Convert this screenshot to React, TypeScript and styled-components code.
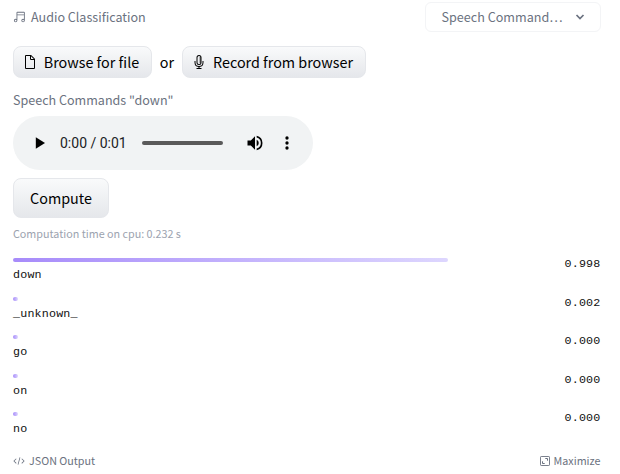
import React from "react";
import styled, { createGlobalStyle } from "styled-components";

const Global = createGlobalStyle`
  *, *::before, *::after { box-sizing: border-box; }
  body { margin: 0; background: #fff; color: #000; font-family: "Noto Sans CJK SC", "Noto Sans", sans-serif; }
  button { font: inherit; color: inherit; margin: 0; cursor: pointer; }
  svg { display: block; flex: none; }
`;

const Widget = styled.main`
  width: 620px;
  height: 474px;
  padding: 2px 19px 0 13px;
  overflow: hidden;
  display: flex;
  flex-direction: column;
`;

const Header = styled.header`
  display: flex;
  justify-content: space-between;
  height: 30px;
  align-items: center;
`;

const Task = styled.div`
  display: flex;
  align-items: center;
  gap: 4px;
  color: #6b7280;
  font-size: 12.55px;
  line-height: 20px;
`;

const Select = styled.button`
  width: 176px;
  height: 30px;
  padding: 0 15px 0 15.5px;
  display: flex;
  align-items: center;
  justify-content: space-between;
  background: #fff;
  border: 1px solid #f3f4f6;
  border-radius: 6px;
  && { color: #6b7280; font-size: 12.6px; line-height: 20px; white-space: nowrap; }
`;

const Sources = styled.div`
  display: flex;
  align-items: center;
  margin-top: 14px;
  font-size: 14.35px;
  line-height: 24px;
`;

const Or = styled.span`
  width: 30px;
  text-align: center;
`;

const Button = styled.button<{ $width: number; $large?: boolean }>`
  width: ${(p) => p.$width}px;
  height: ${(p) => (p.$large ? 40 : 32)}px;
  padding: 0 ${(p) => (p.$large ? 0 : 4)}px 0 0;
  flex: none;
  display: flex;
  align-items: center;
  justify-content: center;
  gap: 6px;
  border: 1px solid #e5e7eb;
  border-radius: 8px;
  background: linear-gradient(to bottom, #f9fafb, #e5e7eb);
  && { font-size: 14.35px; line-height: 24px; }
`;

const SampleName = styled.div`
  margin-top: 12px;
  height: 20px;
  line-height: 20px;
  font-size: 12.55px;
  color: #6b7280;
`;

const Player = styled.div`
  margin: 6px 0 8px;
  width: 300px;
  height: 54px;
  flex: none;
  border-radius: 27px;
  background: #f1f3f4;
  display: flex;
  align-items: center;
  padding: 0 16px 0 17px;
`;

const Time = styled.span`
  width: 82px;
  flex: none;
  padding-left: 10px;
  font: 14px/20px Roboto, sans-serif;
  color: #202124;
  white-space: nowrap;
`;

const Track = styled.div`
  width: 81px;
  flex: none;
  height: 4px;
  margin: 0 22px 0 10px;
  border-radius: 2px;
  background: #5a5a5a;
`;

const Timing = styled.div`
  margin-top: 8px;
  height: 16px;
  font-size: 10.75px;
  line-height: 16px;
  color: #9ca3af;
`;

const Results = styled.div`
  margin-top: 16px;
  padding-right: 0.5px;
  display: grid;
  grid-auto-rows: 38.5px;
  height: 193px;
  font: 11.7px/16px "Liberation Mono", monospace;
  letter-spacing: 0.18px;
  color: #111;
`;

const Result = styled.div`
  display: flex;
  justify-content: space-between;
`;

const Meter = styled.div`
  width: 435px;
`;

const Bar = styled.div`
  height: 4px;
  min-width: 5px;
  border-radius: 2px;
  margin-bottom: 5px;
  background: linear-gradient(to right, #a78bfa, #ddd6fe);
`;

const Score = styled.span`
  margin-top: -2px;
`;

const Footer = styled.footer`
  display: flex;
  justify-content: space-between;
  height: 20px;
  padding-right: 0.5px;
  font-size: 10.75px;
  line-height: 16px;
  color: #6b7280;
`;

const FooterItem = styled.div`
  display: flex;
  align-items: center;
  gap: 4px;
`;

const MusicIcon = () => (
  <svg width="14" height="14" viewBox="0 0 32 32" fill="currentColor">
    <path d="M25 4H10a2 2 0 0 0-2 2v14.6A3.9 3.9 0 0 0 6 20a4 4 0 1 0 4 4V12h15v8.6a3.9 3.9 0 0 0-2-.6 4 4 0 1 0 4 4V6a2 2 0 0 0-2-2ZM6 26a2 2 0 1 1 2-2 2 2 0 0 1-2 2Zm17 0a2 2 0 1 1 2-2 2 2 0 0 1-2 2ZM10 6h15v4H10Z" />
  </svg>
);

const ChevronIcon = () => (
  <svg width="10" height="8" viewBox="0 0 10 8" fill="none" stroke="currentColor" strokeWidth="1.7">
    <path d="m1.5 2 3.5 3.5L8.500 2" />
  </svg>
);

const FileIcon = () => (
  <svg width="16" height="16" viewBox="0 0 32 32" fill="currentColor">
    <path d="m25.7 9.3-7-7A.9.9 0 0 0 18 2H8a2 2 0 0 0-2 2v24a2 2 0 0 0 2 2h16a2 2 0 0 0 2-2V10a.9.9 0 0 0-.3-.7ZM18 4.400l5.600 5.600H18ZM24 28H8V4h8v6a2 2 0 0 0 2 2h6Z" />
  </svg>
);

const MicIcon = () => (
  <svg width="16" height="16" viewBox="0 0 32 32" fill="currentColor">
    <path d="M23 14v3a7 7 0 0 1-14 0v-3H7v3a9 9 0 0 0 8 8.940V28h-4v2h10v-2h-4v-2.060A9 9 0 0 0 25 17v-3Z" />
    <path d="M16 22a5 5 0 0 0 5-5V7A5 5 0 0 0 11 7v10a5 5 0 0 0 5 5ZM13 7a3 3 0 0 1 6 0v10a3 3 0 0 1-6 0Z" />
    <path d="M17 7h3v2h-3zm0 4h3v2h-3zm0 4h3v2h-3z" />
  </svg>
);

const PlayIcon = () => (
  <svg width="20" height="20" viewBox="0 0 24 24"><path d="M7 5v14l11-7Z" /></svg>
);

const VolumeIcon = () => (
  <svg width="20" height="20" viewBox="0 0 24 24">
    <path d="M3 9v6h4l5 5V4L7 9H3Zm13.500 3A4.500 4.500 0 0 0 14 7.970v8.050A4.470 4.470 0 0 0 16.500 12ZM14 3.230v2.060a7 7 0 0 1 0 13.420v2.060A9 9 0 0 0 14 3.230Z" />
  </svg>
);

const MoreIcon = styled(({ className }: { className?: string }) => (
  <svg className={className} width="20" height="20" viewBox="0 0 24 24">
    <path d="M12 8a2 2 0 1 0 0-4 2 2 0 0 0 0 4Zm0 2a2 2 0 1 0 0 4 2 2 0 0 0 0-4Zm0 6a2 2 0 1 0 0 4 2 2 0 0 0 0-4Z" />
  </svg>
))`
  margin-left: 12px;
`;

const CodeIcon = () => (
  <svg width="12" height="12" viewBox="0 0 32 32" fill="currentColor">
    <path d="m31 16-7 7-1.410-1.410L28.170 16l-5.580-5.590L24 9l7 7ZM1 16l7-7 1.410 1.410L3.830 16l5.580 5.590L8 23l-7-7Zm11.420 9.480L17.640 6l1.930.520L14.350 26Z" />
  </svg>
);

const MaximizeIcon = () => (
  <svg width="10" height="10" viewBox="0 0 10 10" fill="none" stroke="currentColor">
    <rect x=".5" y=".5" width="9" height="9" rx=".7" strokeWidth=".9" />
    <path d="M5.300 2.500h2.200v2.200M2.500 5.300v2.200h2.200" strokeWidth="1" />
  </svg>
);

const results = [
  { label: "down", score: 0.998 },
  { label: "_unknown_", score: 0.002 },
  { label: "go", score: 0 },
  { label: "on", score: 0 },
  { label: "no", score: 0 },
];

export default function App() {
  return (
    <>
      <Global />
      <Widget>
        <Header>
          <Task><MusicIcon />Audio Classification</Task>
          <Select>Speech Command… <ChevronIcon /></Select>
        </Header>
        <Sources>
          <Button $width={139}><FileIcon />Browse for file</Button>
          <Or>or</Or>
          <Button $width={184}><MicIcon />Record from browser</Button>
        </Sources>
        <SampleName>Speech Commands "down"</SampleName>
        <Player>
          <PlayIcon />
          <Time>0:00 / 0:01</Time>
          <Track />
          <VolumeIcon />
          <MoreIcon />
        </Player>
        <Button $width={96} $large>Compute</Button>
        <Timing>Computation time on cpu: 0.232 s</Timing>
        <Results>
          {results.map((r) => (
            <Result key={r.label}>
              <Meter>
                <Bar style={{ width: `${Math.min(100, r.score * 100.2)}%` }} />
                {r.label}
              </Meter>
              <Score>{r.score.toFixed(3)}</Score>
            </Result>
          ))}
        </Results>
        <Footer>
          <FooterItem><CodeIcon />JSON Output</FooterItem>
          <FooterItem><MaximizeIcon />Maximize</FooterItem>
        </Footer>
      </Widget>
    </>
  );
}
